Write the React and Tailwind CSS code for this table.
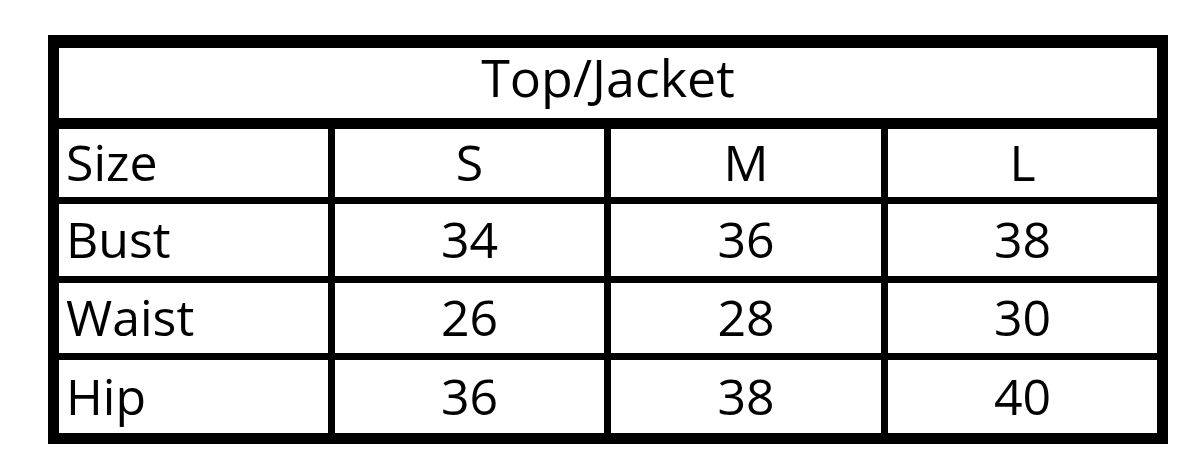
export default function App() {
  const rows = [
    ["Size", "S", "M", "L"],
    ["Bust", "34", "36", "38"],
    ["Waist", "26", "28", "30"],
    ["Hip", "36", "38", "40"],
  ];
  return (
    <div className="w-[1200px] h-[475px] bg-white pt-[35px] pl-[48px]" style={{ fontFamily: "'Open Sans', Lato, sans-serif" }}>
      <div className="w-[1120px] bg-black pt-[13px] px-[11px] pb-[11px] text-black">
        <div className="h-[70px] bg-white flex items-center justify-center text-[52px] leading-none pb-[12px]">Top/Jacket</div>
        <div className="mt-[11px] grid grid-cols-[269px_269px_270px_269px] grid-rows-[68px_72px_70px_73px] gap-x-[7px] gap-y-[7px]">
          {rows.map((r, i) =>
            r.map((c, j) => (
              <div
                key={i + "-" + j}
                className={
                  "bg-white flex items-center text-[50px] leading-none pb-[2px] " +
                  (j === 0 ? "justify-start pl-[7px]" : "justify-center")
                }
              >
                {c}
              </div>
            ))
          )}
        </div>
      </div>
    </div>
  );
}
